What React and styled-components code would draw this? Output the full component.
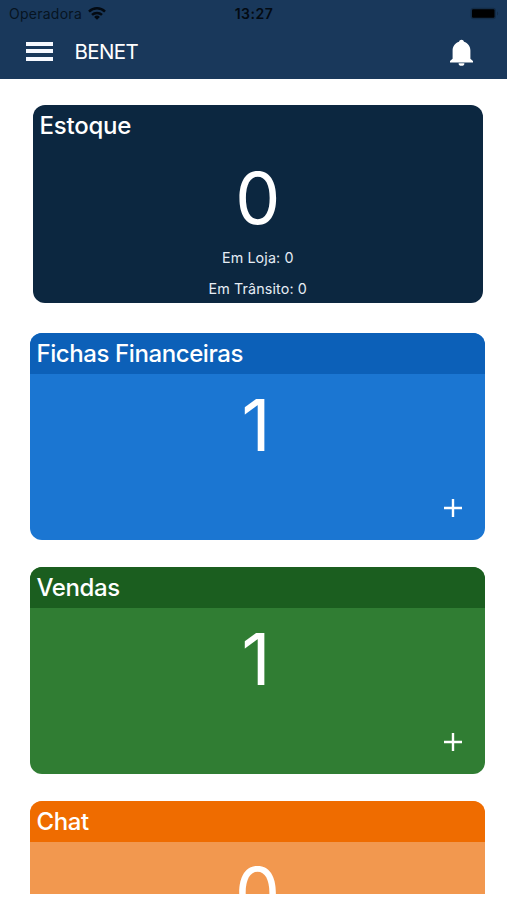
import React from "react";
import styled, { createGlobalStyle } from "styled-components";

const GlobalStyle = createGlobalStyle`
  * { box-sizing: border-box; }
  html, body { margin: 0; background: #fff; overflow: hidden; }
  body { font-family: Inter, "Liberation Sans", sans-serif; color: #fff; }
`;

const Screen = styled.div`
  width: 507px;
  height: 900px;
  padding-bottom: 6px;
  display: flex;
  flex-direction: column;
  overflow: hidden;
  background: #fff;
`;

const Header = styled.header`
  flex: none;
  height: 79px;
  background: #19385b;
`;

const StatusBar = styled.div`
  height: 27px;
  padding: 0 8px 0 9px;
  display: grid;
  grid-template-columns: 1fr auto 1fr;
  align-items: center;
  color: #071421;
`;

const Carrier = styled.div`
  display: flex;
  align-items: center;
  gap: 6px;
  font-size: 14px;
  letter-spacing: 0.26px;
  line-height: 27px;
`;

const Clock = styled.div`
  font-size: 14px;
  font-weight: 600;
  letter-spacing: 0.5px;
  color: #030a12;
`;

const BatteryIcon = styled.svg`
  justify-self: end;
  width: 30px;
  height: 14px;
`;

const Toolbar = styled.div`
  height: 50px;
  padding: 0 33px 0 26px;
  display: flex;
  align-items: center;
`;

const MenuButton = styled.button`
  width: 27px;
  height: 19px;
  margin: -2px 21.5px 0 0;
  padding: 0;
  border: 0;
  background: none;
  display: flex;
  flex-direction: column;
  justify-content: space-between;
`;

const MenuLine = styled.span`
  width: 27px;
  height: 4px;
  background: #f6f9ff;
`;

const AppTitle = styled.h1`
  flex: 1;
  margin: 0;
  font-size: 20.5px;
  font-weight: 400;
  line-height: 50px;
  letter-spacing: -0.65px;
`;

const BellButton = styled.button`
  width: 25px;
  height: 28px;
  margin: 2px 0 0;
  padding: 0;
  border: 0;
  background: none;
`;

const Content = styled.main`
  flex: 1;
  min-height: 0;
  overflow: hidden;
  padding: 26px 22px 0 30px;
`;

const Card = styled.section`
  height: 207px;
  margin: 0 0 27.2px;
  border-radius: 12px;
  overflow: hidden;
  background: ${(p) => p.$color};
  display: flex;
  flex-direction: column;
`;

const StockCard = styled(Card)`
  height: 198px;
  margin: 0 2.5px 29.5px 3px;
`;

const CardTitle = styled.h2`
  flex: none;
  margin: 0;
  height: 41.5px;
  padding-left: 6.5px;
  font-size: 24px;
  font-weight: 550;
  line-height: 42px;
  letter-spacing: ${(p) => p.$spacing || "-0.41px"};
  background: ${(p) => p.$color};
`;

const Count = styled.div`
  height: 87px;
  margin-top: 8px;
  padding-right: ${(p) => (p.$narrow ? "3px" : "0")};
  font-size: 71.5px;
  font-weight: 400;
  line-height: 87px;
  text-align: center;
`;

const Detail = styled.p`
  margin: 0;
  font-size: 14.3px;
  line-height: 31px;
  letter-spacing: 0.12px;
  text-align: center;
  color: #e6edf5;
`;

const CardFooter = styled.div`
  margin-top: auto;
  height: 63px;
  padding-right: 23px;
  display: flex;
  align-items: center;
  justify-content: flex-end;
`;

const AddButton = styled.button`
  width: 18px;
  height: 18px;
  padding: 0;
  border: 0;
  background: none;
  display: block;
`;

const Icon = styled.svg`
  display: block;
  width: 100%;
  height: 100%;
`;

const WifiIcon = styled.svg`
  width: 18px;
  height: 13px;
`;

const cards = [
  { title: "Fichas Financeiras", count: 1, bar: "#0c60b8", body: "#1b76d2", add: true },
  { title: "Vendas", count: 1, bar: "#1b5e1f", body: "#307d33", add: true },
  { title: "Chat", count: 0, bar: "#ef6c00", body: "#f2984f" },
];

function SummaryCard({ title, count, bar, body, add }) {
  return (
    <Card $color={body}>
      <CardTitle $color={bar}>{title}</CardTitle>
      <Count $narrow={count === 1}>{count}</Count>
      {add && (
        <CardFooter>
          <AddButton aria-label="Adicionar">
            <Icon viewBox="0 0 18 18">
              <path d="M9 0v18M0 9h18" stroke="#fff" strokeWidth="2.4" />
            </Icon>
          </AddButton>
        </CardFooter>
      )}
    </Card>
  );
}

export default function App() {
  return (
    <Screen>
      <GlobalStyle />
      <Header>
        <StatusBar>
          <Carrier>
            Operadora
            <WifiIcon viewBox="0 0 18 13">
              <g fill="none" stroke="#030a12" strokeWidth="2.5">
                <path d="M1 4.6a11.4 11.4 0 0 1 16 0" />
                <path d="M4 7.9a7.2 7.2 0 0 1 10 0" />
              </g>
              <path d="M9 12.8 6.1 9.9a4.1 4.1 0 0 1 5.8 0z" fill="#030a12" />
            </WifiIcon>
          </Carrier>
          <Clock>13:27</Clock>
          <BatteryIcon viewBox="0 0 30 14">
            <rect x="1.5" y="0.8" width="25.5" height="11.5" rx="3.2" fill="#142d48" />
            <rect x="3" y="2.3" width="22.5" height="8.5" rx="1.2" fill="#000" />
            <path d="M28 4.5c1.5.6 1.5 3.5 0 4z" fill="#142d48" />
          </BatteryIcon>
        </StatusBar>
        <Toolbar>
          <MenuButton aria-label="Menu">
            <MenuLine />
            <MenuLine />
            <MenuLine />
          </MenuButton>
          <AppTitle>BENET</AppTitle>
          <BellButton aria-label="Notificações">
            <Icon viewBox="0 0 25 28">
              <path
                d="M12.5.8c-1.3 0-2.200.8-2.500 2C6.200 4 3.600 7.200 3.600 11.500V19.800L1 22v1.400h23V22l-2.600-2.200V11.500C21.400 7.200 18.800 4 15 2.800c-.3-1.200-1.200-2-2.500-2z"
                fill="#fff"
              />
              <path d="M9.600 24.200h5.800a2.900 2.600 0 0 1-5.800 0z" fill="#fff" />
            </Icon>
          </BellButton>
        </Toolbar>
      </Header>
      <Content>
        <StockCard $color="#0c2740">
          <CardTitle $spacing="-0.22px">Estoque</CardTitle>
          <Count>0</Count>
          <Detail>Em Loja: 0</Detail>
          <Detail>Em Trânsito: 0</Detail>
        </StockCard>
        {cards.map((card) => (
          <SummaryCard key={card.title} {...card} />
        ))}
      </Content>
    </Screen>
  );
}
